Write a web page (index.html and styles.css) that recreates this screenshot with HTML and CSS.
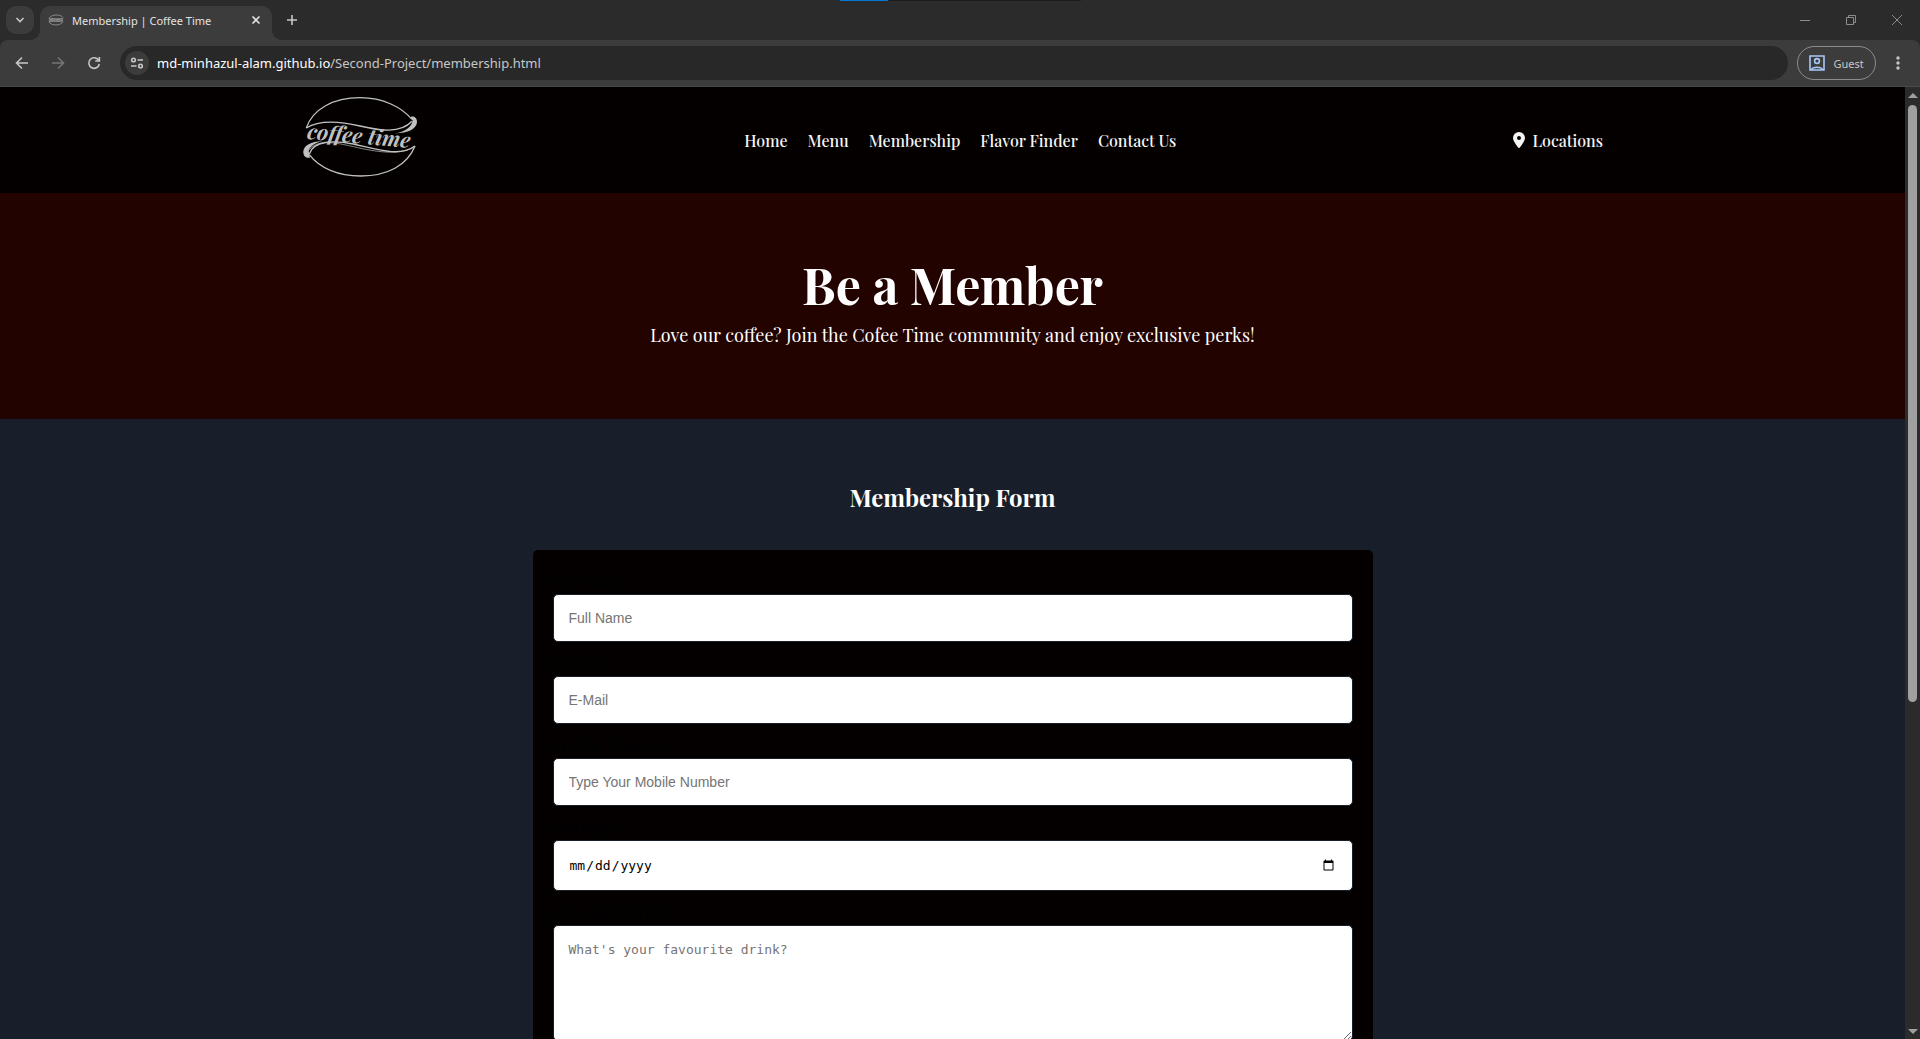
FILE: index.html
```html
<!DOCTYPE html>
<html lang="en">
<head>
<meta charset="utf-8">
<title>Membership | Coffee Time</title>
<link rel="stylesheet" href="styles.css">
</head>
<body>
<div class="browser">
  <div class="tabstrip">
    <button class="tab-search" aria-label="Search tabs"><svg width="10" height="10" viewBox="0 0 10 10"><path d="M1.500 3L5 6.500L8.500 3" class="line bold"/></svg></button>
    <div class="tab">
      <svg class="favicon" width="16" height="12" viewBox="0 0 16 12"><path d="M1 4.500C3 0 13 0 15 3.500M1 8C3 12 13 12 15 7.500" class="line"/><path d="M1 5.500C5 3.500 10 6.500 15 4.500M1 7.500C5 5.500 10 8.500 15 6.500" class="line bold"/></svg>
      <span class="tab-title">Membership | Coffee Time</span>
      <button class="icon-button" aria-label="Close tab"><svg width="10" height="10" viewBox="0 0 10 10"><path d="M1.500 1.500L8.500 8.500M8.500 1.500L1.500 8.500" class="line bold"/></svg></button>
    </div>
    <button class="icon-button new-tab" aria-label="New tab"><svg width="12" height="12" viewBox="0 0 12 12"><path d="M6 1V11M1 6H11" class="line bold"/></svg></button>
    <div class="window-buttons">
      <button class="icon-button" aria-label="Minimize"><svg width="10" height="10" viewBox="0 0 10 10"><path d="M0 5.500H10" class="line"/></svg></button>
      <button class="icon-button" aria-label="Restore"><svg width="10" height="10" viewBox="0 0 10 10"><path d="M.5 2.500H7.500V9.500H.5ZM2.500 2.500V.5H9.500V7.500H7.500" class="line"/></svg></button>
      <button class="icon-button" aria-label="Close"><svg width="10" height="10" viewBox="0 0 10 10"><path d="M0 0L10 10M10 0L0 10" class="line"/></svg></button>
    </div>
    <div class="loader"></div>
  </div>

  <div class="toolbar">
    <button class="icon-button" aria-label="Back"><svg width="14" height="14" viewBox="0 0 14 14"><path d="M13 7H2M7 1.500L1.500 7L7 12.500" class="line bold"/></svg></button>
    <button class="icon-button dim" aria-label="Forward"><svg width="14" height="14" viewBox="0 0 14 14"><path d="M1 7H12M7 1.500L12.500 7L7 12.500" class="line bold"/></svg></button>
    <button class="icon-button" aria-label="Reload"><svg width="14" height="14" viewBox="0 0 14 14"><path d="M11.600 4.200A5.300 5.300 0 1 0 12.300 8M12.400 1V5H8.300" class="line bold"/></svg></button>
    <div class="address">
      <button class="site-info" aria-label="Site information"><svg width="14" height="12" viewBox="0 0 14 12"><path d="M7.500 3H13M1 9H6.500" class="line bold"/><circle cx="3.500" cy="3" r="1.800" class="line bold"/><circle cx="10.500" cy="9" r="1.800" class="line bold"/></svg></button>
      <span><b>md-minhazul-alam.github.io</b>/Second-Project/membership.html</span>
    </div>
    <button class="guest"><svg width="16" height="16" viewBox="0 0 16 16"><path d="M1 1H15V15H1ZM2.500 14.500C4 11.500 12 11.500 13.500 14.500" class="line bold"/><circle cx="8" cy="6" r="2.400" class="line bold"/></svg>Guest</button>
    <button class="icon-button" aria-label="Menu"><svg width="4" height="14" viewBox="0 0 4 14"><circle cx="2" cy="2" r="1.700"/><circle cx="2" cy="7" r="1.700"/><circle cx="2" cy="12" r="1.700"/></svg></button>
  </div>

  <div class="viewport">
    <div class="page">
      <header class="site-header">
        <a href="#" class="brand" aria-label="Coffee Time">
          <svg width="116" height="106" viewBox="66 9 348 318">
            <g fill="none" stroke="currentColor">
              <path d="M79 132C98 75 160 41 240 41C310 41 365 70 396 106" stroke-width="4"/>
              <path d="M79 132C120 106 180 112 240 126C300 140 360 150 396 112" stroke-width="4"/>
              <path d="M88 212C118 252 175 276 242 276C322 276 382 244 405 186" stroke-width="4"/>
              <path d="M88 210C100 170 160 168 220 180C290 196 360 220 405 186" stroke-width="4"/>
              <path d="M85 200C110 166 160 174 220 188C290 204 350 214 400 191" stroke-width="2"/>
            </g>
            <path fill="currentColor" d="M392 99C402 94 411 102 411 114C410 134 385 148 345 148C374 143 394 130 398 110ZM90 221C77 224 69 215 70 202C72 184 92 173 128 171C105 176 88 188 86 202Z"/>
            <text class="logo-text" x="80" y="165" transform="rotate(5 80 165)">coffee time</text>
          </svg>
        </a>
        <nav class="menu">
          <a href="#">Home</a><a href="#">Menu</a><a href="#">Membership</a><a href="#">Flavor Finder</a><a href="#">Contact Us</a>
        </nav>
        <a href="#" class="locations"><svg width="12" height="16" viewBox="0 0 12 16"><path fill-rule="evenodd" d="M6 0A6 6 0 0 0 0 6C0 9 4 14 5.400 15.700Q6 16.200 6.600 15.700C8 14 12 9 12 6A6 6 0 0 0 6 0ZM6 4A2 2 0 1 1 6 8A2 2 0 1 1 6 4Z"/></svg>Locations</a>
      </header>
      <section class="hero">
        <h1>Be a Member</h1>
        <p>Love our coffee? Join the Cofee Time community and enjoy exclusive perks!</p>
      </section>
      <main class="membership">
        <h2>Membership Form</h2>
        <form class="form">
          <div class="field"><label for="name">Full Name</label><input id="name" type="text" placeholder="Full Name"></div>
          <div class="field"><label for="email">E-Mail</label><input id="email" type="email" placeholder="E-Mail"></div>
          <div class="field"><label for="mobile">Mobile Number</label><input id="mobile" type="tel" placeholder="Type Your Mobile Number"></div>
          <div class="field"><label for="birth">Birthdate</label><input id="birth" type="date"></div>
          <div class="field"><label for="drink">Favourite Drink</label><textarea id="drink" placeholder="What's your favourite drink?"></textarea></div>
        </form>
      </main>
    </div>
    <div class="scrollbar" aria-hidden="true">
      <svg width="10" height="6" viewBox="0 0 10 6"><path d="M0 5L5 0L10 5Z"/></svg>
      <div class="track"><div class="thumb"></div></div>
      <svg width="10" height="6" viewBox="0 0 10 6"><path d="M0 0L5 5L10 0Z"/></svg>
    </div>
  </div>
</div>
</body>
</html>
```

FILE: styles.css
```css
* { box-sizing: border-box; }

body {
  margin: 0;
  background: #181f2a;
  font-family: "Playfair Display", "Liberation Serif", serif;
}

h1, h2, p { margin: 0; }
a { color: inherit; text-decoration: none; }
svg { display: block; flex: none; fill: currentColor; }
.line { fill: none; stroke: currentColor; stroke-width: 1; }
.line.bold { stroke-width: 1.6; }
.logo-text { font: italic 700 64px "Playfair Display", "Liberation Serif", serif; }

.browser {
  display: flex;
  flex-direction: column;
  height: 100vh;
  overflow: hidden;
  background: #2b2b2b;
}

/* Browser window frame */
.tabstrip, .toolbar {
  display: flex;
  align-items: center;
  flex: none;
  font-family: "Segoe UI", "Noto Sans", sans-serif;
  color: #c7c7c7;
}
.tabstrip {
  position: relative;
  height: 40px;
  padding-left: 6px;
  background: #2b2b2b;
}
button {
  display: flex;
  align-items: center;
  justify-content: center;
  padding: 0;
  border: 0;
  background: none;
  color: inherit;
  font: inherit;
}
.icon-button { width: 20px; height: 20px; }
.icon-button.dim { color: #757575; }
.tab-search {
  width: 28px;
  height: 28px;
  border-radius: 10px;
  background: #3c3c3c;
}
.tab {
  position: relative;
  display: flex;
  align-items: center;
  align-self: flex-end;
  gap: 8px;
  width: 232px;
  height: 34px;
  margin-left: 6px;
  padding: 0 6px 6px 8px;
  border-radius: 10px 10px 0 0;
  background: #3c3c3c;
  color: #e3e3e3;
  font-size: 11px;
}
/* Curved feet that join the tab to the toolbar */
.tab::before, .tab::after {
  content: "";
  position: absolute;
  bottom: 0;
  width: 10px;
  height: 10px;
}
.tab::before {
  right: 100%;
  background: radial-gradient(circle at 0 0, transparent 10px, #3c3c3c 10px);
}
.tab::after {
  left: 100%;
  background: radial-gradient(circle at 100% 0, transparent 10px, #3c3c3c 10px);
}
.favicon { color: #8a8a8a; }
.tab-title { flex: 1; white-space: nowrap; }
.new-tab { margin-left: 10px; }
.window-buttons {
  display: flex;
  gap: 26px;
  margin-left: auto;
  padding-right: 13px;
  color: #8c8c8c;
}
.loader {
  position: absolute;
  top: 0;
  left: 840px;
  width: 241px;
  height: 1px;
  background: linear-gradient(90deg, #0078d7 48px, #1c1c1c 48px);
}
.toolbar {
  gap: 16px;
  height: 47px;
  padding: 0 12px;
  border-bottom: 1px solid #4a4a4a;
  border-radius: 8px 8px 0 0;
  background: #3c3c3c;
}
.address {
  display: flex;
  align-items: center;
  flex: 1;
  gap: 8px;
  height: 34px;
  padding-left: 5px;
  border-radius: 17px;
  background: #282828;
  font-size: 13px;
}
.address b { color: #fff; font-weight: 400; }
.site-info {
  width: 24px;
  height: 24px;
  border-radius: 50%;
  background: #3c3c3c;
}
.guest {
  gap: 8px;
  width: 79px;
  height: 34px;
  margin: 0 -4px 0 -7px;
  border: 1px solid #8c8c8c;
  border-radius: 17px;
  font-size: 11px;
}
.guest svg { color: #a8c7fa; }

.viewport { display: flex; flex: 1; min-height: 0; }
.page { flex: 1; min-width: 0; overflow: hidden; background: #181f2a; }
.scrollbar {
  display: flex;
  flex-direction: column;
  align-items: center;
  flex: none;
  width: 15px;
  padding: 6px 0 4px;
  background: #2b2b2b;
  color: #a0a0a0;
}
.track { flex: 1; padding: 6px 0; }
.thumb {
  width: 9px;
  height: 65%;
  border-radius: 5px;
  background: #a0a0a0;
}

/* Site header */
.site-header {
  display: flex;
  align-items: center;
  justify-content: space-between;
  padding: 0 302px;
  background: #040000;
  color: #f5f5f5;
  font-size: 16px;
  font-weight: 500;
}
.brand { color: #c0c0c0; }
.menu { display: flex; gap: 20px; padding-right: 10px; }
.locations { display: flex; align-items: center; gap: 8px; }

.hero {
  padding: 60px 20px 69px;
  background: #230300;
  color: #fff;
  text-align: center;
}
.hero h1 { margin-bottom: 3px; font-size: 50px; line-height: 64px; }
.hero p { font-size: 18px; line-height: 30px; }

/* Membership form */
.membership {
  padding: 60px 20px;
  background: #181f2a;
}
.membership h2 {
  margin-bottom: 35px;
  color: #fff;
  font-size: 24px;
  line-height: 36px;
  text-align: center;
}
.form {
  display: flex;
  flex-direction: column;
  gap: 10px;
  max-width: 840px;
  margin: 0 auto;
  padding: 20px;
  border-radius: 5px;
  background: #040000;
}
.field { display: flex; flex-direction: column; }
.field label {
  color: #000;
  font-size: 16px;
  font-weight: 500;
  line-height: 24px;
}
.field input, .field textarea {
  width: 100%;
  height: 48px;
  padding: 0 15px;
  border: 1px solid #181f2a;
  border-radius: 5px;
  background: #fff;
  color: #000;
  font-family: Arial, "Liberation Sans", sans-serif;
  font-size: 14px;
}
.field input::placeholder, .field textarea::placeholder { color: #757575; }
.field input[type="date"] {
  height: 51px;
  font-family: "DejaVu Sans Mono", monospace;
  font-size: 13px;
}
.field textarea {
  height: 116px;
  padding: 15px;
  font-family: "DejaVu Sans Mono", monospace;
  font-size: 13px;
  line-height: 18px;
}
```
